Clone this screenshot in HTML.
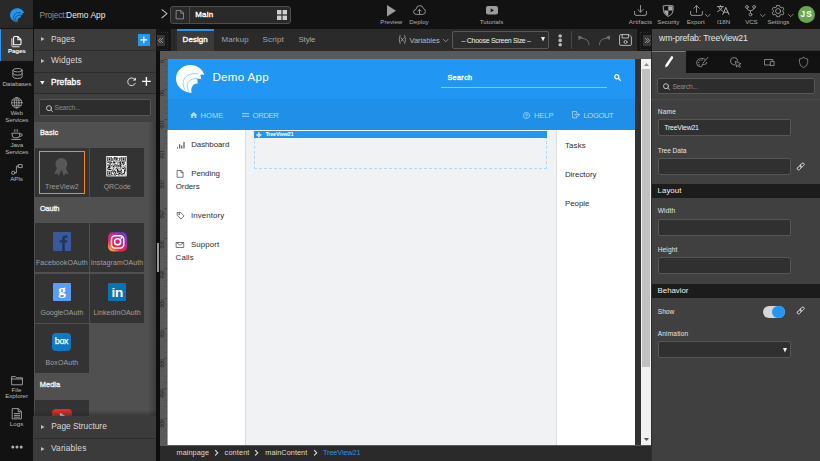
<!DOCTYPE html>
<html><head><meta charset="utf-8"><title>Studio</title>
<style>
*{box-sizing:border-box;margin:0;padding:0}
html,body{width:820px;height:461px;overflow:hidden;background:#121212;font-family:"Liberation Sans",Arial,sans-serif;color:#ddd}
.a{position:absolute}
.t{position:absolute;white-space:nowrap;line-height:1}
svg{position:absolute;overflow:visible;fill:none;stroke-linecap:round;stroke-linejoin:round}
.tile{position:absolute;width:54px;height:49px;background:#333}
.inp{position:absolute;left:658px;width:133px;height:17px;background:#303030;border:1px solid #565656;border-radius:2px}
.hd{position:absolute;left:652px;width:168px;height:14px;background:#1c1c1c}
.sep{position:absolute;left:34px;width:122px;height:1px;background:#2c2c2c}
</style></head><body>
<!-- ============ RAIL ============ -->
<div class="a" style="left:0;top:0;width:33px;height:461px;background:#121212"></div>
<div class="a" style="left:0;top:0;width:33px;height:28.4px;background:#292929"></div>
<div class="a" style="left:0;top:29px;width:33px;height:32px;background:#3a3a3a;border-left:1.5px solid #2196f3"></div>
<!-- logo -->
<svg style="left:9.8px;top:7.6px" width="14.5" height="14.5" viewBox="0 0 29 28"><path fill="#2196f3" stroke="none" d="M15.6 27.8 C7 27.5 0 21.5 0 13.7 C0 6 6.5 0 14.6 0 C21.5 0 27 4.5 28.3 10.2 C27 9.4 25.5 9.3 24.2 9.8 C25 11.2 25.2 12.8 24.9 14.1 C23.6 13.5 22.2 13.6 21 14.2 C21.7 15.6 21.9 17.1 21.5 18.5 C17.5 18.2 14.2 22.5 15.6 27.8 Z"/><path stroke="#292929" stroke-width="1.2" d="M9.5 24.5 C3.5 17 9 6.5 21 8.8 M13 26 C8.5 19.5 12.5 12.5 20.5 13.6"/></svg>
<!-- pages icon -->
<svg style="left:11.4px;top:36.2px" width="11" height="11.4" viewBox="0 0 11 11.4"><path stroke="#fff" stroke-width="1.05" d="M2.6 8.8 V1.6 Q2.6 0.6 3.6 0.6 H7 L10 3.6 V7.8 Q10 8.8 9 8.8 Z M6.9 0.8 V3.7 H9.8"/><path stroke="#e8e8e8" stroke-width="1" d="M0.9 2.6 V9.8 Q0.9 10.8 1.9 10.8 H8.2"/></svg>
<!-- databases -->
<svg style="left:11.5px;top:68px" width="11" height="11" viewBox="0 0 11 11"><g stroke="#a8a8a8" stroke-width="0.9"><ellipse cx="5.5" cy="2.2" rx="4.6" ry="1.7"/><path d="M0.9 2.2 V8.8 Q0.9 10.5 5.5 10.5 Q10.1 10.5 10.1 8.8 V2.2 M0.9 5.6 Q0.9 7.2 5.5 7.2 Q10.1 7.2 10.1 5.6"/></g></svg>
<!-- web -->
<svg style="left:11px;top:96.5px" width="11.5" height="11.5" viewBox="0 0 12 12"><g stroke="#a8a8a8" stroke-width="0.8"><circle cx="6" cy="6" r="5.4"/><ellipse cx="6" cy="6" rx="2.4" ry="5.4"/><path d="M0.6 6 H11.4 M1.4 3.3 H10.6 M1.4 8.7 H10.6 M6 0.6 V11.4"/></g></svg>
<!-- java -->
<svg style="left:11px;top:129px" width="12" height="11" viewBox="0 0 12 11"><g stroke="#a8a8a8" stroke-width="0.9"><path d="M1.2 4.2 H8.6 V6.4 Q8.6 8.8 6.2 8.8 H3.6 Q1.2 8.8 1.2 6.4 Z M8.6 4.8 H10 Q11.2 4.8 11.2 6 Q11.2 7.2 10 7.2 H8.6 M0.6 10.4 H9.4"/><path stroke-width="0.6" d="M3.4 0.5 V2.6 M5 0.5 V2.6 M6.6 0.5 V2.6"/></g></svg>
<!-- apis -->
<svg style="left:11px;top:163.6px" width="12" height="11" viewBox="0 0 12 11"><g stroke="#a8a8a8" stroke-width="0.9"><rect x="7.6" y="0.6" width="3.6" height="3"/><circle cx="2.2" cy="8.8" r="1.6"/><path d="M7.6 2.1 H5.4 V8.8 H3.8"/></g></svg>
<!-- file explorer -->
<svg style="left:10.5px;top:375.5px" width="12" height="9" viewBox="0 0 12 9"><path stroke="#a8a8a8" stroke-width="0.9" d="M0.6 8.4 V0.6 H4.4 L5.6 1.8 H11.4 V8.4 Z M0.6 3 H11.4"/></svg>
<!-- logs -->
<svg style="left:12px;top:407.5px" width="10" height="11.5" viewBox="0 0 10 11.5"><path stroke="#a8a8a8" stroke-width="0.9" d="M0.6 0.6 H6.4 L9.4 3.6 V10.9 H0.6 Z M6.2 0.8 V3.8 H9.2 M2.4 5.6 H7.6 M2.4 7.4 H7.6 M2.4 9.2 H7.6"/></svg>
<!-- dots -->
<svg style="left:11px;top:445px" width="12" height="4" viewBox="0 0 12 4"><g fill="#b0b0b0" stroke="none"><circle cx="1.8" cy="2" r="1.5"/><circle cx="6" cy="2" r="1.5"/><circle cx="10.2" cy="2" r="1.5"/></g></svg>

<!-- ============ TOP BAR ============ -->
<svg style="left:160.5px;top:9.4px" width="7" height="9.4" viewBox="0 0 7 9.4"><path stroke="#bdbdbd" stroke-width="1.1" d="M1 0.6 L6 4.7 L1 8.8"/></svg>
<div class="a" style="left:170px;top:6px;width:121px;height:18px;border:1px solid #4e4e4e;border-radius:3px;background:#2a2a2a"></div>
<div class="a" style="left:189px;top:7px;width:1px;height:16px;background:#4e4e4e"></div>
<svg style="left:176.3px;top:10px" width="8" height="9.4" viewBox="0 0 8 9.4"><path stroke="#9a9a9a" stroke-width="0.8" d="M0.5 0.5 H5 L7.5 3 V8.9 H0.5 Z M4.8 0.7 V3.2 H7.3"/></svg>
<svg style="left:276.6px;top:10px" width="10" height="10" viewBox="0 0 10 10"><g fill="#cfcfcf" stroke="none"><rect x="0" y="0" width="4.4" height="4.4"/><rect x="5.6" y="0" width="4.4" height="4.4"/><rect x="0" y="5.6" width="4.4" height="4.4"/><rect x="5.6" y="5.6" width="4.4" height="4.4"/></g></svg>
<!-- preview -->
<svg style="left:387px;top:4.8px" width="9" height="11.4" viewBox="0 0 9 11.4"><path fill="#9c9c9c" stroke="none" d="M0 0 L9 5.7 L0 11.4 Z"/></svg>
<!-- deploy -->
<svg style="left:412.5px;top:5px" width="13" height="10" viewBox="0 0 13 10"><g stroke="#a0a0a0" stroke-width="0.9"><path d="M3.4 9.4 Q0.6 9.4 0.6 6.9 Q0.6 4.6 3 4.4 Q3.4 0.6 6.8 0.6 Q9.8 0.6 10.4 3.6 Q12.4 4 12.4 6.6 Q12.4 9.4 9.8 9.4 Z"/><path d="M6.5 8.6 V4.6 M4.9 6 L6.5 4.4 L8.1 6"/></g></svg>
<!-- tutorials -->
<svg style="left:485.8px;top:6.4px" width="12" height="8.6" viewBox="0 0 12 8.6"><rect x="0" y="0" width="12" height="8.6" rx="2" fill="#9c9c9c" stroke="none"/><path fill="#121212" stroke="none" d="M4.7 2.4 L8 4.3 L4.7 6.2 Z"/></svg>
<!-- artifacts -->
<svg style="left:634px;top:5px" width="13" height="11" viewBox="0 0 13 11"><path stroke="#a0a0a0" stroke-width="0.9" d="M0.6 6.4 V9 Q0.6 10.4 2 10.4 H11 Q12.4 10.4 12.4 9 V6.4 M6.5 0.5 V7 M3.9 4.6 L6.5 7.2 L9.1 4.6"/></svg>
<!-- security -->
<svg style="left:663px;top:4.6px" width="10.6" height="12" viewBox="0 0 10.6 12"><path stroke="#a8a8a8" stroke-width="0.9" d="M0.5 0.8 Q5.3 -0.2 10.1 0.8 V5.6 Q10.1 9.4 5.3 11.5 Q0.5 9.4 0.5 5.6 Z"/><path fill="#a8a8a8" stroke="none" d="M5.3 1.2 V5.6 H9.6 V1.4 Q7.4 1 5.3 1.2 Z M5.3 5.6 H1 Q1.2 9 5.3 10.9 Z"/></svg>
<!-- export -->
<svg style="left:689.5px;top:5px" width="13" height="11" viewBox="0 0 13 11"><path stroke="#a0a0a0" stroke-width="0.9" d="M0.6 6.4 V9 Q0.6 10.4 2 10.4 H11 Q12.4 10.4 12.4 9 V6.4 M6.5 7.4 V0.8 M3.9 3.2 L6.5 0.6 L9.1 3.2"/></svg>
<svg style="left:704.8px;top:14px" width="5.4" height="3.2" viewBox="0 0 5.4 3.2"><path stroke="#a0a0a0" stroke-width="0.8" d="M0.4 0.4 L2.7 2.7 L5 0.4"/></svg>
<!-- i18n -->
<svg style="left:717.4px;top:5.4px" width="12.4" height="9.8" viewBox="0 0 12.4 9.8"><g stroke="#b0b0b0" stroke-width="0.9"><path d="M0.4 1.6 H6.4 M3.4 0.4 V1.6 M5.4 1.8 Q4.6 5 0.6 6.6 M1.6 1.8 Q2.6 4.8 5.6 6.2"/><path stroke-width="1" d="M5.8 9.4 L8.8 2.4 L11.9 9.4 M6.9 7.2 H10.8"/></g></svg>
<!-- vcs -->
<svg style="left:745px;top:4.6px" width="11" height="11.4" viewBox="0 0 11 11.4"><g stroke="#a0a0a0" stroke-width="0.85"><circle cx="1.9" cy="1.9" r="1.4"/><circle cx="9.1" cy="1.9" r="1.4"/><circle cx="5.5" cy="9.5" r="1.4"/><path d="M1.9 3.3 Q1.9 5.4 5.5 5.8 Q9.1 5.4 9.1 3.3 M5.5 5.8 V8.1"/></g></svg>
<svg style="left:760px;top:13.6px" width="5.4" height="3.2" viewBox="0 0 5.4 3.2"><path stroke="#a0a0a0" stroke-width="0.8" d="M0.4 0.4 L2.7 2.7 L5 0.4"/></svg>
<!-- settings -->
<svg style="left:772.4px;top:4.7px" width="12.2" height="12.2" viewBox="-6.1 -6.1 12.2 12.2"><g stroke="#a0a0a0" stroke-width="0.85"><circle cx="0" cy="0" r="2.5"/><path d="M-1.3 -5.6 H1.3 L1.8 -4 L3.1 -3.3 L4.7 -3.9 L5.9 -1.7 L4.7 -0.7 V0.7 L5.9 1.7 L4.7 3.9 L3.1 3.3 L1.8 4 L1.3 5.6 H-1.3 L-1.8 4 L-3.1 3.3 L-4.7 3.9 L-5.9 1.7 L-4.7 0.7 V-0.7 L-5.9 -1.7 L-4.7 -3.9 L-3.1 -3.3 L-1.8 -4 Z"/></g></svg>
<svg style="left:787.6px;top:13.6px" width="5.4" height="3.2" viewBox="0 0 5.4 3.2"><path stroke="#a0a0a0" stroke-width="0.8" d="M0.4 0.4 L2.7 2.7 L5 0.4"/></svg>
<div class="a" style="left:798px;top:6px;width:17px;height:17px;border-radius:9px;background:#6aa84f"></div>

<!-- ============ LEFT PANEL ============ -->
<div class="a" style="left:34px;top:29px;width:122px;height:432px;background:#505050"></div>
<div class="a" style="left:148px;top:122px;width:8px;height:294px;background:linear-gradient(to right,rgba(30,30,30,0),rgba(30,30,30,.4))"></div>
<div class="a" style="left:34px;top:29px;width:122px;height:65px;background:#3b3b3b"></div>
<div class="a" style="left:34px;top:94px;width:122px;height:28px;background:#404040"></div>
<div class="sep" style="top:50px"></div><div class="sep" style="top:72px"></div><div class="sep" style="top:93px"></div>
<svg style="left:40.6px;top:37.2px" width="3.6" height="4" viewBox="0 0 4 4.4"><path fill="#bcbcbc" stroke="none" d="M0 0 L4 2.2 L0 4.4 Z"/></svg>
<svg style="left:40.6px;top:58.8px" width="3.6" height="4" viewBox="0 0 4 4.4"><path fill="#bcbcbc" stroke="none" d="M0 0 L4 2.2 L0 4.4 Z"/></svg>
<svg style="left:40.4px;top:80.8px" width="4.6" height="3.4" viewBox="0 0 4.6 3.4"><path fill="#fff" stroke="none" d="M0 0 H4.6 L2.3 3.4 Z"/></svg>
<div class="a" style="left:137.6px;top:33.7px;width:12.2px;height:12.3px;background:#2196f3"></div>
<svg style="left:139.9px;top:36px" width="7.6" height="7.6" viewBox="0 0 8 8"><path stroke="#fff" stroke-width="1.3" stroke-linecap="butt" d="M4 0.4 V7.6 M0.4 4 H7.6"/></svg>
<!-- refresh + plus -->
<svg style="left:126.8px;top:77px" width="9.4" height="9.4" viewBox="0 0 9.4 9.4"><path stroke="#f0f0f0" stroke-width="0.9" d="M8.2 6.4 A3.9 3.9 0 1 1 7.6 2.2"/><path fill="#f0f0f0" stroke="none" d="M8.9 0.4 V3.6 H5.7 Z"/></svg>
<svg style="left:141.5px;top:77.2px" width="8.8" height="8.8" viewBox="0 0 8.8 8.8"><path stroke="#fff" stroke-width="1.4" stroke-linecap="butt" d="M4.4 0 V8.8 M0 4.4 H8.8"/></svg>
<!-- search -->
<div class="a" style="left:39px;top:99px;width:112px;height:17px;background:#2d2d2d;border:1px solid #565656;border-radius:2px"></div>
<svg style="left:45.8px;top:104.6px" width="7" height="7" viewBox="0 0 7 7"><g stroke="#d0d0d0" stroke-width="0.9"><circle cx="3" cy="3.2" r="2.5"/><path d="M4.9 5.1 L6.5 6.6"/></g></svg>
<!-- tiles -->
<div class="tile" style="left:34.7px;top:148px"></div>
<div class="tile" style="left:90px;top:148px"></div>
<div class="a" style="left:38.6px;top:151.3px;width:46.6px;height:43px;border:1.7px solid #f8861f"></div>
<svg style="left:54.3px;top:157.5px" width="14.8" height="18.2" viewBox="0 0 14.8 18.2"><g fill="#585858" stroke="none"><circle cx="7.4" cy="6" r="6"/><path d="M3 10 L0.2 16.4 L3.4 15.6 L5 18 L7.2 11.8 Z M11.8 10 L14.6 16.4 L11.4 15.6 L9.8 18 L7.6 11.8 Z"/></g></svg>
<svg style="left:106.4px;top:155.8px" width="21" height="20.4" viewBox="-1.5 -1.5 32 32"><rect x="-1.5" y="-1.5" width="32" height="32" fill="#fff" stroke="none"/><path fill="#111" stroke="none" d="M0 0h7v1h-7zM10 0h3v1h-3zM15 0h1v1h-1zM20 0h1v1h-1zM22 0h7v1h-7zM0 1h1v1h-1zM6 1h1v1h-1zM11 1h4v1h-4zM16 1h1v1h-1zM18 1h1v1h-1zM22 1h1v1h-1zM28 1h1v1h-1zM0 2h1v1h-1zM2 2h3v1h-3zM6 2h1v1h-1zM8 2h2v1h-2zM11 2h1v1h-1zM13 2h2v1h-2zM16 2h1v1h-1zM18 2h3v1h-3zM22 2h1v1h-1zM24 2h3v1h-3zM28 2h1v1h-1zM0 3h1v1h-1zM2 3h3v1h-3zM6 3h1v1h-1zM8 3h2v1h-2zM11 3h1v1h-1zM13 3h2v1h-2zM16 3h1v1h-1zM19 3h2v1h-2zM22 3h1v1h-1zM24 3h3v1h-3zM28 3h1v1h-1zM0 4h1v1h-1zM2 4h3v1h-3zM6 4h1v1h-1zM8 4h1v1h-1zM11 4h2v1h-2zM14 4h2v1h-2zM19 4h1v1h-1zM22 4h1v1h-1zM24 4h3v1h-3zM28 4h1v1h-1zM0 5h1v1h-1zM6 5h1v1h-1zM8 5h2v1h-2zM13 5h1v1h-1zM15 5h1v1h-1zM17 5h1v1h-1zM19 5h1v1h-1zM22 5h1v1h-1zM28 5h1v1h-1zM0 6h7v1h-7zM10 6h1v1h-1zM15 6h1v1h-1zM18 6h1v1h-1zM20 6h1v1h-1zM22 6h7v1h-7zM9 7h1v1h-1zM11 7h1v1h-1zM13 7h2v1h-2zM18 7h1v1h-1zM20 7h1v1h-1zM0 8h4v1h-4zM5 8h2v1h-2zM9 8h3v1h-3zM13 8h1v1h-1zM16 8h1v1h-1zM18 8h4v1h-4zM23 8h3v1h-3zM27 8h1v1h-1zM4 9h5v1h-5zM10 9h3v1h-3zM17 9h1v1h-1zM20 9h1v1h-1zM23 9h2v1h-2zM27 9h1v1h-1zM3 10h1v1h-1zM5 10h1v1h-1zM10 10h1v1h-1zM16 10h1v1h-1zM19 10h3v1h-3zM24 10h2v1h-2zM27 10h1v1h-1zM0 11h2v1h-2zM3 11h2v1h-2zM10 11h1v1h-1zM12 11h2v1h-2zM15 11h1v1h-1zM21 11h2v1h-2zM25 11h1v1h-1zM1 12h1v1h-1zM5 12h1v1h-1zM8 12h1v1h-1zM11 12h1v1h-1zM13 12h1v1h-1zM15 12h1v1h-1zM18 12h4v1h-4zM24 12h3v1h-3zM0 13h1v1h-1zM2 13h3v1h-3zM6 13h2v1h-2zM9 13h1v1h-1zM11 13h1v1h-1zM13 13h2v1h-2zM16 13h3v1h-3zM20 13h2v1h-2zM28 13h1v1h-1zM3 14h2v1h-2zM6 14h1v1h-1zM9 14h2v1h-2zM12 14h2v1h-2zM15 14h1v1h-1zM17 14h2v1h-2zM20 14h2v1h-2zM25 14h1v1h-1zM1 15h4v1h-4zM8 15h3v1h-3zM14 15h2v1h-2zM17 15h1v1h-1zM19 15h2v1h-2zM22 15h1v1h-1zM24 15h1v1h-1zM27 15h2v1h-2zM1 16h3v1h-3zM5 16h1v1h-1zM11 16h1v1h-1zM16 16h1v1h-1zM21 16h1v1h-1zM27 16h1v1h-1zM0 17h5v1h-5zM7 17h1v1h-1zM10 17h1v1h-1zM14 17h1v1h-1zM20 17h1v1h-1zM23 17h6v1h-6zM0 18h1v1h-1zM9 18h1v1h-1zM12 18h1v1h-1zM14 18h4v1h-4zM19 18h1v1h-1zM21 18h1v1h-1zM24 18h2v1h-2zM28 18h1v1h-1zM1 19h5v1h-5zM7 19h1v1h-1zM10 19h1v1h-1zM13 19h1v1h-1zM15 19h2v1h-2zM18 19h1v1h-1zM22 19h1v1h-1zM26 19h1v1h-1zM28 19h1v1h-1zM0 20h2v1h-2zM3 20h2v1h-2zM6 20h2v1h-2zM9 20h1v1h-1zM15 20h2v1h-2zM20 20h2v1h-2zM27 20h2v1h-2zM8 21h1v1h-1zM10 21h2v1h-2zM15 21h4v1h-4zM21 21h2v1h-2zM26 21h3v1h-3zM0 22h7v1h-7zM8 22h3v1h-3zM12 22h2v1h-2zM15 22h1v1h-1zM17 22h1v1h-1zM19 22h2v1h-2zM22 22h2v1h-2zM26 22h3v1h-3zM0 23h1v1h-1zM6 23h1v1h-1zM8 23h1v1h-1zM10 23h3v1h-3zM15 23h7v1h-7zM27 23h1v1h-1zM0 24h1v1h-1zM2 24h3v1h-3zM6 24h1v1h-1zM9 24h1v1h-1zM12 24h2v1h-2zM16 24h1v1h-1zM18 24h1v1h-1zM21 24h2v1h-2zM26 24h2v1h-2zM0 25h1v1h-1zM2 25h3v1h-3zM6 25h1v1h-1zM18 25h3v1h-3zM23 25h5v1h-5zM0 26h1v1h-1zM2 26h3v1h-3zM6 26h1v1h-1zM10 26h5v1h-5zM17 26h4v1h-4zM22 26h1v1h-1zM25 26h2v1h-2zM0 27h1v1h-1zM6 27h1v1h-1zM8 27h1v1h-1zM11 27h1v1h-1zM14 27h4v1h-4zM21 27h4v1h-4zM0 28h7v1h-7zM8 28h2v1h-2zM11 28h3v1h-3zM17 28h1v1h-1zM19 28h1v1h-1zM21 28h1v1h-1zM23 28h1v1h-1zM26 28h1v1h-1zM28 28h1v1h-1z"/></svg>
<div class="tile" style="left:34.7px;top:223.4px"></div>
<div class="tile" style="left:90px;top:223.4px"></div>
<div class="tile" style="left:34.7px;top:274px"></div>
<div class="tile" style="left:90px;top:274px"></div>
<div class="tile" style="left:34.7px;top:324px"></div>
<div class="tile" style="left:34.7px;top:400px"></div>
<!-- fb -->
<div class="a" style="left:53px;top:232.4px;width:18px;height:19px;background:#3b5998;border-radius:1px"></div>
<svg style="left:53px;top:232.4px" width="18" height="19" viewBox="0 0 18 19"><path fill="#22335e" stroke="none" d="M9.2 19 V10.6 H6.8 V8.2 H9.2 V6.4 Q9.2 3.4 12.2 3.4 H14.4 V5.8 H12.8 Q11.8 5.8 11.8 6.8 V8.2 H14.4 L14 10.6 H11.8 V19 Z"/></svg>
<!-- instagram -->
<svg style="left:107.5px;top:232px" width="19.2" height="19.6" viewBox="0 0 20 20"><defs><linearGradient id="ig" x1="0.1" y1="1" x2="0.9" y2="0"><stop offset="0" stop-color="#fec053"/><stop offset="0.3" stop-color="#f2203e"/><stop offset="0.65" stop-color="#b729a8"/><stop offset="1" stop-color="#5342d6"/></linearGradient></defs><rect x="0" y="0" width="20" height="20" rx="5" fill="url(#ig)" stroke="none"/><g stroke="#fff" stroke-width="1.6"><rect x="3.6" y="3.6" width="12.8" height="12.8" rx="3.6"/><circle cx="10" cy="10" r="3.2"/></g><circle cx="14" cy="6" r="1" fill="#fff" stroke="none"/></svg>
<!-- google -->
<div class="a" style="left:53px;top:283.4px;width:18px;height:18px;background:#5a9cf6;border-radius:1px"></div>
<div class="t" style="left:53px;top:282.6px;width:18px;text-align:center;font-size:15px;font-weight:bold;color:#fff;font-family:'Liberation Serif',serif">g</div>
<!-- linkedin -->
<div class="a" style="left:108.2px;top:283.4px;width:18px;height:18px;background:#0a73b1;border-radius:1px"></div>
<div class="t" style="left:108.2px;top:286.2px;width:18px;text-align:center;font-size:13.5px;font-weight:bold;color:#fff;letter-spacing:-0.4px">in</div>
<!-- box -->
<div class="a" style="left:52px;top:333px;width:19px;height:18.4px;background:#0e7ac4;border-radius:4px"></div>
<div class="t" style="left:52px;top:337px;width:19px;text-align:center;font-size:8.8px;color:#fff;letter-spacing:-0.2px;-webkit-text-stroke:0.25px #fff">box</div>
<!-- youtube -->
<div class="a" style="left:52.3px;top:409px;width:19.4px;height:14px;background:#e52d27;border-radius:4px"></div>
<svg style="left:59.6px;top:412.6px" width="5" height="5" viewBox="0 0 5 5"><path fill="#fff" stroke="none" d="M0 0 L5 2.6 L0 5 Z"/></svg>
<!-- bottom sections -->
<div class="a" style="left:34px;top:410px;width:122px;height:6px;background:linear-gradient(rgba(40,40,40,0),rgba(40,40,40,.55))"></div>
<div class="a" style="left:33px;top:416px;width:123px;height:45px;background:#3b3b3b"></div>
<div class="sep" style="top:438px"></div>
<svg style="left:40.6px;top:424.6px" width="3.6" height="4" viewBox="0 0 4 4.4"><path fill="#bcbcbc" stroke="none" d="M0 0 L4 2.2 L0 4.4 Z"/></svg>
<svg style="left:40.6px;top:446.6px" width="3.6" height="4" viewBox="0 0 4 4.4"><path fill="#bcbcbc" stroke="none" d="M0 0 L4 2.2 L0 4.4 Z"/></svg>
<!-- splitter -->
<div class="a" style="left:156px;top:29px;width:4px;height:432px;background:#0e0e0e"></div>
<div class="a" style="left:157px;top:242.5px;width:2px;height:29px;background:#9a9a9a"></div>

<!-- ============ CENTER TOOLBAR ============ -->
<div class="a" style="left:156px;top:29px;width:14.6px;height:22px;background:#161616"></div>
<div class="a" style="left:160.6px;top:31.8px;width:7.6px;height:18px;border:1px dotted #2c2c2c;border-left:none"></div>
<div class="a" style="left:156.6px;top:35px;width:8.6px;height:11px;background:#383838"></div>
<svg style="left:158px;top:38.2px" width="5" height="5" viewBox="0 0 6 6"><path stroke="#c0c0c0" stroke-width="0.9" d="M2.8 0.6 L0.6 3 L2.8 5.4 M5.4 0.6 L3.2 3 L5.4 5.4"/></svg>
<div class="a" style="left:170.6px;top:29px;width:466.4px;height:22px;background:#2a2a2a"></div>
<div class="a" style="left:637px;top:29px;width:15px;height:22px;background:#161616"></div>
<div class="a" style="left:639.6px;top:31.8px;width:8px;height:18px;border:1px dotted #2c2c2c;border-right:none"></div>
<div class="a" style="left:177px;top:29px;width:37px;height:22px;background:#3a3a3a;border-top:2px solid #2196f3"></div>
<!-- (x) -->
<svg style="left:398.3px;top:35.4px" width="8.8" height="9" viewBox="0 0 8.8 9"><g stroke="#a6a6a6" stroke-width="0.8"><path d="M2 0.5 Q0.4 4.5 2 8.5 M6.8 0.5 Q8.4 4.5 6.8 8.5 M3.1 3 L5.7 6.2 M5.7 3 L3.1 6.2"/></g></svg>
<svg style="left:442.7px;top:39px" width="5.4" height="3.4" viewBox="0 0 5.4 3.4"><path stroke="#a6a6a6" stroke-width="0.8" d="M0.4 0.4 L2.7 2.8 L5 0.4"/></svg>
<div class="a" style="left:452.4px;top:31.2px;width:96.4px;height:17.7px;background:#2c2c2c;border:1px solid #585858;border-radius:2px"></div>
<svg style="left:541px;top:37.4px" width="4" height="4.4" viewBox="0 0 4 4.4"><path fill="#f0f0f0" stroke="none" d="M0 0 H4 L2 4.4 Z"/></svg>
<svg style="left:558px;top:33.6px" width="4.4" height="12.8" viewBox="0 0 4.4 12.8"><g fill="#b8b8b8" stroke="none"><circle cx="2.2" cy="2" r="1.8"/><circle cx="2.2" cy="6.4" r="1.8"/><circle cx="2.2" cy="10.8" r="1.8"/></g></svg>
<div class="a" style="left:571.4px;top:31px;width:1px;height:18px;background:#454545"></div>
<!-- undo / redo -->
<svg style="left:577.5px;top:34.8px" width="12.4" height="10.4" viewBox="0 0 12.4 10.4"><path stroke="#727272" stroke-width="0.9" d="M11 9.8 Q11 3.4 3.6 3.2"/><path fill="#727272" stroke="none" d="M0.4 0.6 L0.6 5.2 L4.6 2.2 Z"/></svg>
<svg style="left:598.3px;top:34.8px" width="12.4" height="10.4" viewBox="0 0 12.4 10.4"><path stroke="#727272" stroke-width="0.9" d="M1.4 9.8 Q1.4 3.4 8.8 3.2"/><path fill="#727272" stroke="none" d="M12 0.6 L11.8 5.2 L7.8 2.2 Z"/></svg>
<!-- save -->
<svg style="left:619px;top:34px" width="13" height="12" viewBox="0 0 13 12"><g stroke="#c4c4c4" stroke-width="0.9"><path d="M0.6 1.6 Q0.6 0.6 1.6 0.6 H10.2 L12.4 2.8 V10.4 Q12.4 11.4 11.4 11.4 H1.6 Q0.6 11.4 0.6 10.4 Z M3.2 0.8 V4 H9.4 V0.8"/><circle cx="6.5" cy="8" r="1.5"/></g></svg>
<div class="a" style="left:642.6px;top:35px;width:8.4px;height:11px;background:#383838"></div>
<svg style="left:645px;top:38.2px" width="5" height="5" viewBox="0 0 6 6"><path stroke="#c0c0c0" stroke-width="0.9" d="M0.6 0.6 L2.8 3 L0.6 5.4 M3.2 0.6 L5.4 3 L3.2 5.4"/></svg>

<!-- ============ CANVAS AREA ============ -->
<div class="a" style="left:160px;top:51px;width:491px;height:394.5px;background:#5a5a5a"></div>
<div class="a" style="left:635.1px;top:59px;width:5.8px;height:386px;background:#323232"></div>
<!-- app -->
<div class="a" style="left:167.4px;top:59px;width:467.7px;height:386px;background:#fff"></div>
<div class="a" style="left:167.4px;top:59px;width:467.7px;height:40.2px;background:#2196f3"></div>
<div class="a" style="left:167.4px;top:99.2px;width:467.7px;height:30.4px;background:#1f8fe8"></div>
<svg style="left:176.2px;top:64.8px" width="29" height="28.2" viewBox="0 0 29 28"><path fill="#fff" stroke="none" d="M15.6 27.8 C7 27.5 0 21.5 0 13.7 C0 6 6.5 0 14.6 0 C21.5 0 27 4.5 28.3 10.2 C27 9.4 25.5 9.3 24.2 9.8 C25 11.2 25.2 12.8 24.9 14.1 C23.6 13.5 22.2 13.6 21 14.2 C21.7 15.6 21.9 17.1 21.5 18.5 C17.5 18.2 14.2 22.5 15.6 27.8 Z"/><path stroke="#2196f3" stroke-width="0.45" d="M9.5 25.2 C3.5 17 9 6.5 22.5 8.6 M13 26.6 C8.5 19.5 12.5 12.5 21.8 13.4"/></svg>
<div class="a" style="left:440.7px;top:87px;width:166.5px;height:1px;background:#8cc6f8"></div>
<svg style="left:613.8px;top:74.4px" width="7" height="7" viewBox="0 0 7 7"><g stroke="#fff" stroke-width="1.2"><circle cx="2.8" cy="2.8" r="2.1"/><path d="M4.5 4.5 L6.4 6.4"/></g></svg>
<!-- nav icons -->
<svg style="left:189.7px;top:112.2px" width="7.4" height="6" viewBox="0 0 7.4 6"><path fill="#b5dbfb" stroke="none" d="M3.7 0 L7.4 3.2 H6.4 V6 H4.5 V4 H2.9 V6 H1 V3.2 H0 Z"/></svg>
<svg style="left:241.9px;top:113px" width="7.2" height="4" viewBox="0 0 7.2 4"><path stroke="#b5dbfb" stroke-width="0.9" stroke-linecap="butt" d="M0 0.7 H7.2 M0 3.3 H7.2"/></svg>
<svg style="left:523px;top:111.6px" width="7" height="7" viewBox="0 0 7 7"><g stroke="#b5dbfb" stroke-width="0.7"><circle cx="3.5" cy="3.5" r="3.1"/><path d="M2.5 2.8 Q2.5 1.8 3.5 1.8 Q4.5 1.8 4.5 2.7 Q4.5 3.4 3.5 3.8 V4.3 M3.5 5.2 V5.3"/></g></svg>
<svg style="left:571.8px;top:111.4px" width="8" height="7.4" viewBox="0 0 8 7.4"><path stroke="#b5dbfb" stroke-width="0.8" d="M4.6 2 V0.5 H0.5 V6.9 H4.6 V5.4 M2.6 3.7 H7.4 M5.8 2.1 L7.4 3.7 L5.8 5.3"/></svg>
<!-- content -->
<div class="a" style="left:245.4px;top:129.6px;width:311.4px;height:315.4px;background:#f1f2f4;border-left:1px solid #dcdcdc;border-right:1px solid #dcdcdc"></div>
<div class="a" style="left:254.4px;top:130.8px;width:293px;height:38px;border:1px dashed #b4d9f8;border-top:none"></div>
<div class="a" style="left:254.4px;top:130.8px;width:293px;height:7.2px;background:#2196f3"></div>
<svg style="left:256.4px;top:131.6px" width="5.8" height="5.8" viewBox="0 0 6 6"><path fill="#fff" stroke="none" d="M3 0 L4.2 1.4 H3.5 V2.5 H4.6 V1.8 L6 3 L4.6 4.2 V3.5 H3.5 V4.6 H4.2 L3 6 L1.8 4.6 H2.5 V3.5 H1.4 V4.2 L0 3 L1.4 1.8 V2.5 H2.5 V1.4 H1.8 Z"/></svg>
<!-- left nav icons -->
<svg style="left:176.7px;top:141.6px" width="7.6" height="6.6" viewBox="0 0 7.6 6.6"><path stroke="#4a4a4a" stroke-width="1.1" stroke-linecap="butt" d="M0.6 6.6 V5.2 M2.7 6.6 V2.2 M4.8 6.6 V3.6 M7 6.6 V0"/></svg>
<svg style="left:177px;top:169.6px" width="6.6" height="7.8" viewBox="0 0 6.6 7.8"><path stroke="#555" stroke-width="0.8" d="M0.5 0.5 H4.2 L6.1 2.4 V7.3 H0.5 Z M4 0.7 V2.6 H5.9"/></svg>
<svg style="left:176.7px;top:212px" width="7.6" height="7.4" viewBox="0 0 7.6 7.4"><g stroke="#555" stroke-width="0.8"><path d="M0.5 0.5 H3.6 L7.1 4 L4 7 L0.5 3.6 Z"/><circle cx="2.1" cy="2.1" r="0.5"/></g></svg>
<svg style="left:176.4px;top:241.6px" width="8.2" height="6" viewBox="0 0 8.2 6"><path stroke="#555" stroke-width="0.8" d="M0.5 0.5 H7.7 V5.5 H0.5 Z M0.7 0.8 L4.1 3.2 L7.5 0.8"/></svg>
<!-- ruler ticks -->
<div class="a" style="left:165.4px;top:58.6px;width:1.8px;height:386.4px;background:repeating-linear-gradient(to bottom,rgba(40,40,40,.22) 0,rgba(40,40,40,.22) 0.8px,transparent 0.8px,transparent 5.98px)"></div>
<div class="a" style="left:163.6px;top:58.6px;width:3.6px;height:386.4px;background:repeating-linear-gradient(to bottom,rgba(40,40,40,.3) 0,rgba(40,40,40,.3) 0.8px,transparent 0.8px,transparent 29.9px)"></div>
<div class="a" style="left:167px;top:59px;width:0.5px;height:386px;background:rgba(80,60,50,.5)"></div><!--RULER-->
<!-- scrollbar -->
<div class="a" style="left:640.7px;top:59px;width:10.3px;height:386px;background:#f1f1f1"></div>
<div class="a" style="left:642px;top:69.4px;width:7.8px;height:297.4px;background:#c1c1c1"></div>
<svg style="left:643.8px;top:62.8px" width="5" height="3" viewBox="0 0 5 3"><path fill="#8a8a8a" stroke="none" d="M2.5 0 L5 3 H0 Z"/></svg>
<svg style="left:643.8px;top:438px" width="5" height="3" viewBox="0 0 5 3"><path fill="#505050" stroke="none" d="M0 0 H5 L2.5 3 Z"/></svg>
<!-- breadcrumb -->
<div class="a" style="left:160px;top:445.5px;width:491px;height:15.5px;background:#2a2a2a"></div>
<svg style="left:215px;top:450.4px" width="3.2" height="5.6" viewBox="0 0 3.6 6.4"><path stroke="#dcdcdc" stroke-width="1.3" d="M0.5 0.5 L3.1 3.2 L0.5 5.9"/></svg>
<svg style="left:255.4px;top:450.4px" width="3.2" height="5.6" viewBox="0 0 3.6 6.4"><path stroke="#dcdcdc" stroke-width="1.3" d="M0.5 0.5 L3.1 3.2 L0.5 5.9"/></svg>
<svg style="left:313.6px;top:450.4px" width="3.2" height="5.6" viewBox="0 0 3.6 6.4"><path stroke="#dcdcdc" stroke-width="1.3" d="M0.5 0.5 L3.1 3.2 L0.5 5.9"/></svg>

<!-- ============ RIGHT PANEL ============ -->
<div class="a" style="left:651px;top:51px;width:169px;height:410px;background:#404040;border-left:1px solid #2c2c2c"></div>
<div class="a" style="left:652px;top:29px;width:168px;height:22px;background:#3f3f3f;border-bottom:1px solid #333"></div>
<div class="a" style="left:652px;top:51px;width:168px;height:21.6px;background:#121212"></div>
<div class="a" style="left:652px;top:51px;width:33.6px;height:21.6px;background:#404040;border-top:1.5px solid #2196f3"></div>
<!-- tab icons -->
<svg style="left:664.6px;top:56.4px" width="8.4" height="11.6" viewBox="0 0 8.4 11.6"><path fill="#fff" stroke="none" d="M6.3 0.3 Q7 -0.2 7.6 0.4 L8 0.8 Q8.5 1.5 8 2.2 L2.6 10.2 L0.3 11.4 L0.5 8.8 Z"/></svg>
<svg style="left:696.4px;top:57px" width="12.2" height="10.4" viewBox="0 0 12.2 10.4"><g stroke="#9c9c9c" stroke-width="0.8"><path d="M9.2 2.4 Q7.6 1.2 5.6 1.4 Q0.6 2 0.6 6 Q0.6 9.6 4.6 9.8 Q6.4 9.8 6 8.6 Q5.6 7.4 7 7.4 H8.6 Q10.8 7.4 10.8 5.4"/><path d="M11.8 0.4 L7 6.2"/></g><g fill="#9c9c9c" stroke="none"><circle cx="2.6" cy="5.6" r="0.65"/><circle cx="3.8" cy="3.6" r="0.65"/><circle cx="6" cy="2.9" r="0.65"/><circle cx="3.2" cy="7.8" r="0.65"/></g></svg>
<svg style="left:730.4px;top:57px" width="11.4" height="11" viewBox="0 0 11.4 11"><g stroke="#9c9c9c" stroke-width="0.8"><path d="M4.8 8 Q0.5 7.6 0.5 4.1 Q0.5 0.5 4.1 0.5 Q7.7 0.5 7.7 4.1"/><path d="M5.4 4.8 L6.6 10.2 L7.8 8.4 L9.6 10.4 L10.6 9.6 L8.8 7.6 L10.6 6.8 Z"/></g></svg>
<svg style="left:764.4px;top:59px" width="10.6" height="7" viewBox="0 0 10.6 7"><g stroke="#9c9c9c" stroke-width="0.8"><path d="M6.4 6 H0.5 V0.5 H8.8 V2"/><rect x="6.8" y="2.4" width="3.3" height="4.1"/></g></svg>
<svg style="left:798.8px;top:57px" width="9.2" height="11.2" viewBox="0 0 9.2 11.2"><path stroke="#8e8e8e" stroke-width="0.8" d="M4.6 0.5 Q6.6 1.8 8.7 2 V5.4 Q8.7 9 4.6 10.7 Q0.5 9 0.5 5.4 V2 Q2.6 1.8 4.6 0.5 Z"/></svg>
<!-- search -->
<div class="a" style="left:657.4px;top:78.3px;width:158px;height:16.2px;background:#2d2d2d;border:1px solid #565656;border-radius:2px"></div>
<svg style="left:663px;top:83px" width="7" height="7" viewBox="0 0 7 7"><g stroke="#d0d0d0" stroke-width="0.9"><circle cx="3" cy="3.2" r="2.5"/><path d="M4.9 5.1 L6.5 6.6"/></g></svg>
<div class="a" style="left:651px;top:99px;width:169px;height:1px;background:#4a4a4a"></div>
<div class="inp" style="top:119.3px"></div>
<div class="inp" style="top:158px"></div>
<div class="hd" style="top:183.7px"></div>
<div class="inp" style="top:219px"></div>
<div class="inp" style="top:257.2px"></div>
<div class="hd" style="top:283.6px"></div>
<div class="inp" style="top:341.2px"></div>
<svg style="left:783.4px;top:347.6px" width="4" height="4.4" viewBox="0 0 4 4.4"><path fill="#f0f0f0" stroke="none" d="M0 0 H4 L2 4.4 Z"/></svg>
<!-- link icons -->
<svg style="left:797px;top:163px" width="7.4" height="7" viewBox="0 0 8.4 8"><g stroke="#e0e0e0" stroke-width="1" transform="rotate(-45 4.2 4)"><rect x="-0.8" y="2.5" width="5.6" height="3" rx="1.5"/><rect x="3.6" y="2.5" width="5.6" height="3" rx="1.5"/></g></svg>
<svg style="left:797px;top:307.2px" width="7.4" height="7" viewBox="0 0 8.4 8"><g stroke="#e0e0e0" stroke-width="1" transform="rotate(-45 4.2 4)"><rect x="-0.8" y="2.5" width="5.6" height="3" rx="1.5"/><rect x="3.6" y="2.5" width="5.6" height="3" rx="1.5"/></g></svg>
<!-- toggle -->
<div class="a" style="left:763px;top:305.6px;width:22px;height:12.8px;border-radius:6.4px;background:#d6d6d6"></div>
<div class="a" style="left:772.4px;top:305.6px;width:12.6px;height:12.8px;border-radius:6.4px;background:#2196f3"></div>

<div class="t" style="left:8.0px;top:47.8px;font-size:6.2px;color:#fff;letter-spacing:-0.12px;font-weight:bold">Pages</div>
<div class="t" style="left:2.5px;top:80.8px;font-size:6.2px;color:#bababa;letter-spacing:-0.10px">Databases</div>
<div class="t" style="left:10.5px;top:109.8px;font-size:6.2px;color:#bababa;letter-spacing:-0.14px">Web</div>
<div class="t" style="left:5.2px;top:116.8px;font-size:6.2px;color:#bababa;letter-spacing:-0.08px">Services</div>
<div class="t" style="left:10.5px;top:141.8px;font-size:6.2px;color:#bababa;letter-spacing:-0.16px">Java</div>
<div class="t" style="left:5.2px;top:148.8px;font-size:6.2px;color:#bababa;letter-spacing:-0.08px">Services</div>
<div class="t" style="left:10.2px;top:175.8px;font-size:6.2px;color:#bababa;letter-spacing:-0.11px">APIs</div>
<div class="t" style="left:11.5px;top:386.8px;font-size:6.2px;color:#bababa;letter-spacing:0.01px">File</div>
<div class="t" style="left:5.2px;top:392.8px;font-size:6.2px;color:#bababa;letter-spacing:-0.02px">Explorer</div>
<div class="t" style="left:9.7px;top:420.8px;font-size:6.2px;color:#bababa;letter-spacing:0.05px">Logs</div>
<div class="t" style="left:39.5px;top:10.9px;font-size:8.4px;color:#8f8f8f;letter-spacing:-0.16px">Project:</div>
<div class="t" style="left:66.1px;top:10.9px;font-size:8.4px;color:#ececec;letter-spacing:0.03px">Demo App</div>
<div class="t" style="left:195.2px;top:11.3px;font-size:7.9px;color:#fff;letter-spacing:0.27px;-webkit-text-stroke:0.35px #fff">Main</div>
<div class="t" style="left:380.3px;top:18.8px;font-size:6.2px;color:#b0b0b0;letter-spacing:0.00px">Preview</div>
<div class="t" style="left:409.3px;top:18.8px;font-size:6.2px;color:#b0b0b0;letter-spacing:0.03px">Deploy</div>
<div class="t" style="left:479.7px;top:18.8px;font-size:6.2px;color:#b0b0b0;letter-spacing:0.01px">Tutorials</div>
<div class="t" style="left:628.7px;top:18.8px;font-size:6.2px;color:#b0b0b0;letter-spacing:0.14px">Artifacts</div>
<div class="t" style="left:657.3px;top:18.8px;font-size:6.2px;color:#b0b0b0;letter-spacing:-0.04px">Security</div>
<div class="t" style="left:686.7px;top:18.8px;font-size:6.2px;color:#b0b0b0;letter-spacing:0.02px">Export</div>
<div class="t" style="left:717.1px;top:18.8px;font-size:6.2px;color:#b0b0b0;letter-spacing:0.01px">I18N</div>
<div class="t" style="left:745.3px;top:18.8px;font-size:6.2px;color:#b0b0b0;letter-spacing:-0.24px">VCS</div>
<div class="t" style="left:767.4px;top:18.8px;font-size:6.2px;color:#b0b0b0;letter-spacing:-0.05px">Settings</div>
<div class="t" style="left:800.6px;top:11.1px;font-size:8.2px;color:#fff;letter-spacing:1.15px;font-weight:bold">JS</div>
<div class="t" style="left:51.0px;top:34.9px;font-size:8.4px;color:#d8d8d8;letter-spacing:0.02px">Pages</div>
<div class="t" style="left:51.0px;top:55.9px;font-size:8.4px;color:#d8d8d8;letter-spacing:0.11px">Widgets</div>
<div class="t" style="left:51.0px;top:77.9px;font-size:8.4px;color:#fff;letter-spacing:0.12px;-webkit-text-stroke:0.35px #fff">Prefabs</div>
<div class="t" style="left:54.6px;top:105.3px;font-size:6.8px;color:#8a8a8a;letter-spacing:-0.16px">Search...</div>
<div class="t" style="left:39.9px;top:128.8px;font-size:7.4px;color:#f0f0f0;letter-spacing:0.03px;-webkit-text-stroke:0.35px #f0f0f0">Basic</div>
<div class="t" style="left:45.1px;top:183.1px;font-size:7.0px;color:#9a9a9a;letter-spacing:0.06px">TreeView2</div>
<div class="t" style="left:103.7px;top:183.1px;font-size:7.0px;color:#9a9a9a;letter-spacing:-0.04px">QRCode</div>
<div class="t" style="left:39.9px;top:204.8px;font-size:7.4px;color:#f0f0f0;letter-spacing:-0.14px;-webkit-text-stroke:0.35px #f0f0f0">Oauth</div>
<div class="t" style="left:36.0px;top:259.1px;font-size:7.0px;color:#a0a0a0;letter-spacing:0.08px">FacebookOAuth</div>
<div class="t" style="left:90.7px;top:259.1px;font-size:7.0px;color:#a0a0a0;letter-spacing:0.12px">InstagramOAuth</div>
<div class="t" style="left:40.4px;top:309.1px;font-size:7.0px;color:#a0a0a0;letter-spacing:0.05px">GoogleOAuth</div>
<div class="t" style="left:93.4px;top:309.1px;font-size:7.0px;color:#a0a0a0;letter-spacing:0.08px">LinkedInOAuth</div>
<div class="t" style="left:45.5px;top:359.1px;font-size:7.0px;color:#a0a0a0;letter-spacing:0.11px">BoxOAuth</div>
<div class="t" style="left:39.8px;top:380.8px;font-size:7.4px;color:#f0f0f0;letter-spacing:0.06px;-webkit-text-stroke:0.35px #f0f0f0">Media</div>
<div class="t" style="left:51.2px;top:421.9px;font-size:8.4px;color:#d8d8d8;letter-spacing:-0.02px">Page Structure</div>
<div class="t" style="left:51.0px;top:443.9px;font-size:8.4px;color:#d8d8d8;letter-spacing:0.13px">Variables</div>
<div class="t" style="left:182.6px;top:36.3px;font-size:7.9px;color:#fff;letter-spacing:0.12px;-webkit-text-stroke:0.35px #fff">Design</div>
<div class="t" style="left:221.6px;top:36.3px;font-size:7.9px;color:#a6a6a6;letter-spacing:0.13px">Markup</div>
<div class="t" style="left:262.6px;top:36.3px;font-size:7.9px;color:#a6a6a6;letter-spacing:0.19px">Script</div>
<div class="t" style="left:298.4px;top:36.3px;font-size:7.9px;color:#a6a6a6;letter-spacing:-0.11px">Style</div>
<div class="t" style="left:409.6px;top:36.6px;font-size:7.6px;color:#b8b8b8;letter-spacing:-0.11px">Variables</div>
<div class="t" style="left:461.6px;top:37.1px;font-size:7.0px;color:#f2f2f2;letter-spacing:-0.29px">– Choose Screen Size –</div>
<div class="t" style="left:212.4px;top:71.2px;font-size:11.6px;color:#fff;letter-spacing:0.31px">Demo App</div>
<div class="t" style="left:447.4px;top:73.9px;font-size:7.2px;color:#fff;letter-spacing:0.39px;-webkit-text-stroke:0.35px #fff">Search</div>
<div class="t" style="left:200.6px;top:111.6px;font-size:7.6px;color:#b5dbfb;letter-spacing:-0.01px">HOME</div>
<div class="t" style="left:252.6px;top:111.6px;font-size:7.6px;color:#b5dbfb;letter-spacing:-0.30px">ORDER</div>
<div class="t" style="left:534.0px;top:111.6px;font-size:7.6px;color:#b5dbfb;letter-spacing:-0.12px">HELP</div>
<div class="t" style="left:583.5px;top:111.6px;font-size:7.6px;color:#b5dbfb;letter-spacing:-0.37px">LOGOUT</div>
<div class="t" style="left:265.5px;top:132.3px;font-size:5.6px;color:#fff;letter-spacing:-0.26px;font-weight:bold">TreeView21</div>
<div class="t" style="left:191.2px;top:141.3px;font-size:7.9px;color:#2c2c2c;letter-spacing:-0.06px">Dashboard</div>
<div class="t" style="left:191.2px;top:170.3px;font-size:7.9px;color:#2c2c2c;letter-spacing:-0.04px">Pending</div>
<div class="t" style="left:175.8px;top:183.3px;font-size:7.9px;color:#2c2c2c;letter-spacing:-0.06px">Orders</div>
<div class="t" style="left:190.9px;top:212.3px;font-size:7.9px;color:#2c2c2c;letter-spacing:0.10px">Inventory</div>
<div class="t" style="left:190.9px;top:241.3px;font-size:7.9px;color:#2c2c2c;letter-spacing:0.12px">Support</div>
<div class="t" style="left:175.6px;top:254.3px;font-size:7.9px;color:#2c2c2c;letter-spacing:0.11px">Calls</div>
<div class="t" style="left:564.9px;top:142.3px;font-size:7.9px;color:#2c2c2c;letter-spacing:0.16px">Tasks</div>
<div class="t" style="left:564.9px;top:171.3px;font-size:7.9px;color:#2c2c2c;letter-spacing:0.01px">Directory</div>
<div class="t" style="left:564.9px;top:200.3px;font-size:7.9px;color:#2c2c2c;letter-spacing:-0.01px">People</div>
<div class="t" style="left:176.6px;top:448.8px;font-size:7.3px;color:#dcdcdc;letter-spacing:0.05px">mainpage</div>
<div class="t" style="left:224.6px;top:448.8px;font-size:7.3px;color:#dcdcdc;letter-spacing:0.14px">content</div>
<div class="t" style="left:265.3px;top:448.8px;font-size:7.3px;color:#dcdcdc;letter-spacing:0.06px">mainContent</div>
<div class="t" style="left:323.0px;top:448.8px;font-size:7.3px;color:#2f8fe9;letter-spacing:-0.10px">TreeView21</div>
<div class="t" style="left:659.0px;top:33.7px;font-size:8.7px;color:#e4e4e4;letter-spacing:-0.14px">wm-prefab: TreeView21</div>
<div class="t" style="left:672.4px;top:84.3px;font-size:6.8px;color:#8a8a8a;letter-spacing:-0.21px">Search...</div>
<div class="t" style="left:657.7px;top:109.4px;font-size:6.6px;color:#e4e4e4;letter-spacing:0.22px">Name</div>
<div class="t" style="left:664.2px;top:124.1px;font-size:7.0px;color:#f0f0f0;letter-spacing:-0.24px">TreeView21</div>
<div class="t" style="left:657.7px;top:148.4px;font-size:6.6px;color:#e4e4e4;letter-spacing:-0.05px">Tree Data</div>
<div class="t" style="left:657.6px;top:187.4px;font-size:7.8px;color:#f0f0f0;letter-spacing:0.06px">Layout</div>
<div class="t" style="left:657.7px;top:208.4px;font-size:6.6px;color:#e4e4e4;letter-spacing:0.16px">Width</div>
<div class="t" style="left:657.7px;top:247.4px;font-size:6.6px;color:#e4e4e4;letter-spacing:0.10px">Height</div>
<div class="t" style="left:657.6px;top:287.4px;font-size:7.8px;color:#f0f0f0;letter-spacing:-0.00px">Behavior</div>
<div class="t" style="left:657.7px;top:309.4px;font-size:6.6px;color:#e4e4e4;letter-spacing:0.04px">Show</div>
<div class="t" style="left:657.7px;top:331.4px;font-size:6.6px;color:#e4e4e4;letter-spacing:0.15px">Animation</div>
<div class="t" style="left:159.8px;top:60.2px;width:4.4px;font-size:5.4px;color:#222;writing-mode:vertical-rl;line-height:4.8px;letter-spacing:-0.2px">0</div>
<div class="t" style="left:159.8px;top:90.1px;width:4.4px;font-size:5.4px;color:#222;writing-mode:vertical-rl;line-height:4.8px;letter-spacing:-0.2px">50</div>
<div class="t" style="left:159.8px;top:120.0px;width:4.4px;font-size:5.4px;color:#222;writing-mode:vertical-rl;line-height:4.8px;letter-spacing:-0.2px">100</div>
<div class="t" style="left:159.8px;top:149.9px;width:4.4px;font-size:5.4px;color:#222;writing-mode:vertical-rl;line-height:4.8px;letter-spacing:-0.2px">150</div>
<div class="t" style="left:159.8px;top:179.8px;width:4.4px;font-size:5.4px;color:#222;writing-mode:vertical-rl;line-height:4.8px;letter-spacing:-0.2px">200</div>
<div class="t" style="left:159.8px;top:209.7px;width:4.4px;font-size:5.4px;color:#222;writing-mode:vertical-rl;line-height:4.8px;letter-spacing:-0.2px">250</div>
<div class="t" style="left:159.8px;top:239.6px;width:4.4px;font-size:5.4px;color:#222;writing-mode:vertical-rl;line-height:4.8px;letter-spacing:-0.2px">300</div>
<div class="t" style="left:159.8px;top:269.5px;width:4.4px;font-size:5.4px;color:#222;writing-mode:vertical-rl;line-height:4.8px;letter-spacing:-0.2px">350</div>
<div class="t" style="left:159.8px;top:299.4px;width:4.4px;font-size:5.4px;color:#222;writing-mode:vertical-rl;line-height:4.8px;letter-spacing:-0.2px">400</div>
<div class="t" style="left:159.8px;top:329.3px;width:4.4px;font-size:5.4px;color:#222;writing-mode:vertical-rl;line-height:4.8px;letter-spacing:-0.2px">450</div>
<div class="t" style="left:159.8px;top:359.2px;width:4.4px;font-size:5.4px;color:#222;writing-mode:vertical-rl;line-height:4.8px;letter-spacing:-0.2px">500</div>
<div class="t" style="left:159.8px;top:389.1px;width:4.4px;font-size:5.4px;color:#222;writing-mode:vertical-rl;line-height:4.8px;letter-spacing:-0.2px">550</div>
<div class="t" style="left:159.8px;top:419.0px;width:4.4px;font-size:5.4px;color:#222;writing-mode:vertical-rl;line-height:4.8px;letter-spacing:-0.2px">600</div>
</body></html>
